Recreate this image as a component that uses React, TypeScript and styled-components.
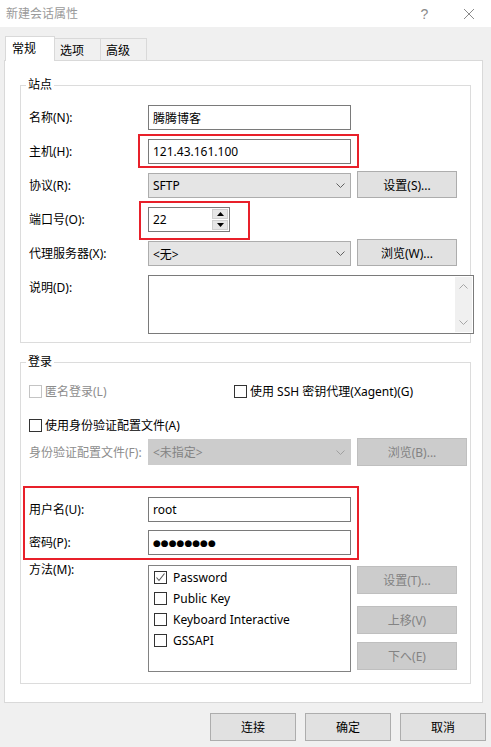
import React from 'react';
import styled, { createGlobalStyle } from 'styled-components';

const GlobalStyle = createGlobalStyle`
  html, body {
    margin: 0;
    padding: 0;
    background: #f0f0f0;
  }
  body {
    font-family: "Noto Sans", "Noto Sans CJK SC", sans-serif;
    font-size: 12px;
    color: #000;
  }
  *, *::before, *::after {
    box-sizing: border-box;
  }
`;

const Chevron: React.FC<{ up?: boolean; color?: string }> = ({ up, color = '#606060' }) => (
    <svg width="9" height="5" viewBox="0 0 9 5">
        <polyline
            points={up ? '0.5,4.5 4.5,0.5 8.5,4.5' : '0.5,0.5 4.5,4.5 8.5,0.5'}
            fill="none"
            stroke={color}
            strokeWidth="1"
        />
    </svg>
);

const Tick = () => (
    <svg width="11" height="11" viewBox="0 0 11 11">
        <polyline points="1.5,5.5 4,8.5 9.5,1.5" fill="none" stroke="#555" strokeWidth="1.1" />
    </svg>
);

const App: React.FC = () => {
    return (
        <>
            <GlobalStyle />
            <Window>
                <TitleBar>
                    <Title>新建会话属性</Title>
                    <TitleButton>?</TitleButton>
                    <TitleButton $w={44}>
                        <svg width="12" height="12" viewBox="0 0 12 12">
                            <path d="M1 1 L11 11 M11 1 L1 11" stroke="#8a8a8a" strokeWidth="1" />
                        </svg>
                    </TitleButton>
                </TitleBar>

                <Body>
                    <TabStrip>
                        <Tab $active>常规</Tab>
                        <Tab>选项</Tab>
                        <Tab>高级</Tab>
                    </TabStrip>

                    <Panel>
                        <Group>
                            <Legend>站点</Legend>
                            <FormGrid>
                                <Label>名称(N):</Label>
                                <TextInput>腾腾博客</TextInput>
                                <span />

                                <Label>主机(H):</Label>
                                <Highlight $l={-10} $t={-5} $w={221} $h={34}>
                                    <TextInput>121.43.161.100</TextInput>
                                </Highlight>
                                <span />

                                <Label>协议(R):</Label>
                                <Select>
                                    SFTP
                                    <Chevron />
                                </Select>
                                <Button $h={27} $lift>设置(S)...</Button>

                                <Label>端口号(O):</Label>
                                <Highlight $l={-9} $t={-6} $w={111} $h={39} $fit>
                                    <SpinBox>
                                        <SpinValue>22</SpinValue>
                                        <SpinButtons>
                                            <SpinArrow>
                                                <svg width="7" height="4" viewBox="0 0 7 4">
                                                    <polygon points="0,4 3.5,0 7,4" fill="#000" />
                                                </svg>
                                            </SpinArrow>
                                            <SpinArrow>
                                                <svg width="7" height="4" viewBox="0 0 7 4">
                                                    <polygon points="0,0 3.5,4 7,0" fill="#000" />
                                                </svg>
                                            </SpinArrow>
                                        </SpinButtons>
                                    </SpinBox>
                                </Highlight>
                                <span />

                                <Label>代理服务器(X):</Label>
                                <Select>
                                    {'<无>'}
                                    <Chevron />
                                </Select>
                                <Button $h={27} $lift>浏览(W)...</Button>

                                <Label $top>说明(D):</Label>
                                <DescBox>
                                    <ScrollTrack>
                                        <Chevron up color="#a6a6a6" />
                                        <Chevron color="#a6a6a6" />
                                    </ScrollTrack>
                                </DescBox>
                            </FormGrid>
                        </Group>

                        <Group $mt={11} $pt={11} $pb={11}>
                            <Legend>登录</Legend>
                            <CheckRow>
                                <CheckItem $w={205} $disabled>
                                    <CheckBox $disabled />
                                    匿名登录(L)
                                </CheckItem>
                                <CheckItem>
                                    <CheckBox />
                                    使用 SSH 密钥代理(Xagent)(G)
                                </CheckItem>
                            </CheckRow>
                            <CheckRow $mt={14}>
                                <CheckItem>
                                    <CheckBox />
                                    使用身份验证配置文件(A)
                                </CheckItem>
                            </CheckRow>
                            <LineGrid $mt={3} $h={28} $side={110}>
                                <Label $disabled>身份验证配置文件(F):</Label>
                                <Select $disabled $h={26}>
                                    {'<未指定>'}
                                    <Chevron color="#a0a0a0" />
                                </Select>
                                <Button $w={110} $disabled>
                                    浏览(B)...
                                </Button>
                            </LineGrid>

                            <Credentials>
                                <LineGrid $h={25}>
                                    <Label>用户名(U):</Label>
                                    <TextInput>root</TextInput>
                                </LineGrid>
                                <LineGrid $h={25} $mt={8}>
                                    <Label>密码(P):</Label>
                                    <TextInput>
                                        <Dots>●●●●●●●●</Dots>
                                    </TextInput>
                                </LineGrid>
                            </Credentials>

                            <MethodGrid>
                                <Label $top $nudge={-3}>
                                    方法(M):
                                </Label>
                                <MethodList>
                                    <ListItem>
                                        <CheckBox>
                                            <Tick />
                                        </CheckBox>
                                        Password
                                    </ListItem>
                                    <ListItem>
                                        <CheckBox />
                                        Public Key
                                    </ListItem>
                                    <ListItem>
                                        <CheckBox />
                                        Keyboard Interactive
                                    </ListItem>
                                    <ListItem>
                                        <CheckBox />
                                        GSSAPI
                                    </ListItem>
                                </MethodList>
                                <SideButtons>
                                    <Button $disabled>设置(T)...</Button>
                                    <Button $disabled $mt={12}>
                                        上移(V)
                                    </Button>
                                    <Button $disabled $mt={8}>
                                        下へ(E)
                                    </Button>
                                </SideButtons>
                            </MethodGrid>
                        </Group>
                    </Panel>

                    <Footer>
                        <Button $w={86}>连接</Button>
                        <Button $w={86}>确定</Button>
                        <Button $w={86}>取消</Button>
                    </Footer>
                </Body>
            </Window>
        </>
    );
};

const Window = styled.div`
    width: 491px;
    height: 747px;
    display: flex;
    flex-direction: column;
    overflow: hidden;
    background: #f0f0f0;
`;

const TitleBar = styled.div`
    height: 27px;
    flex: none;
    display: flex;
    align-items: center;
    padding-left: 6px;
    background: #fff;
`;

const Title = styled.div`
    flex: 1;
    color: #9a9a9a;
    font-size: 12px;
    line-height: 16px;
`;

const TitleButton = styled.div<{ $w?: number }>`
    width: ${p => p.$w ?? 45}px;
    height: 27px;
    display: flex;
    align-items: center;
    justify-content: center;
    color: #8a8a8a;
    font-family: "Liberation Sans", sans-serif;
    font-size: 14px;
`;

const Body = styled.div`
    flex: 1;
    display: flex;
    flex-direction: column;
    padding: 9px 8px 0 4px;
`;

const TabStrip = styled.div`
    height: 25px;
    flex: none;
    display: flex;
    align-items: flex-end;
    padding-left: 1px;
    margin-bottom: -1px;
    position: relative;
    z-index: 1;
`;

const Tab = styled.div<{ $active?: boolean }>`
    width: ${p => (p.$active ? 50 : 46)}px;
    height: ${p => (p.$active ? 25 : 22)}px;
    margin-bottom: ${p => (p.$active ? 0 : 1)}px;
    padding: 4px 0 0 ${p => (p.$active ? 6 : 5)}px;
    line-height: 16px;
    font-size: 12px;
    background: ${p => (p.$active ? '#fff' : '#f0f0f0')};
    border: 1px solid #d9d9d9;
    border-bottom: none;
    ${p => (p.$active ? '' : 'border-left: none;')}
`;

const Panel = styled.div`
    height: 643px;
    flex: none;
    background: #fff;
    border: 1px solid #d9d9d9;
    padding: 16px 11px 0 15px;
`;

const Group = styled.fieldset<{ $mt?: number; $pt?: number; $pb?: number }>`
    margin: ${p => p.$mt ?? 0}px 0 0 0;
    padding: ${p => p.$pt ?? 12}px 7px ${p => p.$pb ?? 8}px 8px;
    border: 1px solid #dcdcdc;
    min-width: 0;
`;

const Legend = styled.legend`
    padding: 0 2px;
    margin-left: -3px;
    line-height: 16px;
    font-size: 12px;
`;

const FormGrid = styled.div`
    display: grid;
    grid-template-columns: 113px 203px 100px;
    column-gap: 6px;
    row-gap: 9px;
`;

const Label = styled.div<{ $disabled?: boolean; $top?: boolean; $nudge?: number }>`
    line-height: ${p => (p.$top && p.$nudge ? '16px' : '25px')};
    white-space: nowrap;
    color: ${p => (p.$disabled ? '#8d8d8d' : '#000')};
    align-self: ${p => (p.$top ? 'start' : 'center')};
    margin-top: ${p => p.$nudge ?? 0}px;
`;

const TextInput = styled.div`
    height: 25px;
    display: flex;
    align-items: center;
    padding: 0 4px;
    border: 1px solid #7a7a7a;
    background: #fff;
    white-space: nowrap;
`;

const Highlight = styled.div<{ $l: number; $t: number; $w: number; $h: number; $fit?: boolean }>`
    position: relative;
    ${p => (p.$fit ? 'justify-self: start;' : '')}

    &::after {
        content: '';
        position: absolute;
        left: ${p => p.$l}px;
        top: ${p => p.$t}px;
        width: ${p => p.$w}px;
        height: ${p => p.$h}px;
        border: 2px solid #e8202a;
        pointer-events: none;
    }
`;

const Select = styled.div<{ $disabled?: boolean; $h?: number }>`
    height: ${p => p.$h ?? 25}px;
    display: flex;
    align-items: center;
    justify-content: space-between;
    padding: 0 5px 0 4px;
    border: 1px solid ${p => (p.$disabled ? '#cccccc' : '#adadad')};
    background: ${p => (p.$disabled ? '#cccccc' : '#e5e5e5')};
    color: ${p => (p.$disabled ? '#838383' : '#000')};
`;

const Button = styled.div<{ $w?: number; $h?: number; $disabled?: boolean; $lift?: boolean; $mt?: number }>`
    width: ${p => p.$w ?? 100}px;
    height: ${p => p.$h ?? 28}px;
    margin-top: ${p => (p.$lift ? -2 : p.$mt ?? 0)}px;
    display: flex;
    align-items: center;
    justify-content: center;
    border: 1px solid ${p => (p.$disabled ? '#bfbfbf' : '#adadad')};
    background: ${p => (p.$disabled ? '#cccccc' : '#e1e1e1')};
    color: ${p => (p.$disabled ? '#838383' : '#000')};
    font-size: 12px;
`;

const SpinBox = styled.div`
    width: 82px;
    height: 25px;
    display: flex;
    border: 1px solid #7a7a7a;
    background: #fff;
`;

const SpinValue = styled.div`
    flex: 1;
    display: flex;
    align-items: center;
    padding-left: 4px;
`;

const SpinButtons = styled.div`
    width: 17px;
    display: flex;
    flex-direction: column;
    gap: 1px;
    padding: 1px 1px 1px 0;
`;

const SpinArrow = styled.div`
    flex: 1;
    display: flex;
    align-items: center;
    justify-content: center;
    background: #e6e6e6;
    border: 1px solid #cfcfcf;
`;

const DescBox = styled.div`
    grid-column: 2 / span 2;
    width: 326px;
    height: 59px;
    display: flex;
    justify-content: flex-end;
    padding: 1px;
    border: 1px solid #7a7a7a;
    background: #fff;
`;

const ScrollTrack = styled.div`
    width: 17px;
    display: flex;
    flex-direction: column;
    align-items: center;
    justify-content: space-between;
    padding: 7px 0 7px;
    background: #f0f0f0;
`;

const CheckRow = styled.div<{ $mt?: number }>`
    height: 20px;
    display: flex;
    align-items: center;
    margin-top: ${p => p.$mt ?? 0}px;
`;

const CheckItem = styled.div<{ $w?: number; $disabled?: boolean }>`
    ${p => (p.$w ? `width: ${p.$w}px;` : '')}
    display: flex;
    align-items: center;
    gap: 3px;
    white-space: nowrap;
    color: ${p => (p.$disabled ? '#8d8d8d' : '#000')};
`;

const CheckBox = styled.div<{ $disabled?: boolean }>`
    width: 13px;
    height: 13px;
    flex: none;
    display: flex;
    align-items: center;
    justify-content: center;
    border: 1px solid ${p => (p.$disabled ? '#c4c4c4' : '#333')};
    background: #fff;
`;

const LineGrid = styled.div<{ $mt?: number; $h: number; $side?: number }>`
    display: grid;
    grid-template-columns: 113px 203px ${p => (p.$side ? `${p.$side}px` : '')};
    column-gap: 6px;
    align-items: center;
    height: ${p => p.$h}px;
    margin-top: ${p => p.$mt ?? 0}px;
`;

const Credentials = styled.div`
    position: relative;
    margin-top: 31px;

    &::after {
        content: '';
        position: absolute;
        left: -6px;
        top: -11px;
        width: 336px;
        height: 74px;
        border: 2px solid #e8202a;
        pointer-events: none;
    }
`;

const Dots = styled.span`
    font-family: "DejaVu Sans", sans-serif;
    font-size: 9px;
    letter-spacing: 0;
`;

const MethodGrid = styled.div`
    display: grid;
    grid-template-columns: 113px 203px 100px;
    column-gap: 6px;
    align-items: start;
    margin-top: 10px;
`;

const MethodList = styled.div`
    height: 107px;
    padding: 1px 0 0 5px;
    border: 1px solid #828282;
    background: #fff;
`;

const ListItem = styled.div`
    height: 21px;
    display: flex;
    align-items: center;
    gap: 6px;
    white-space: nowrap;
`;

const SideButtons = styled.div`
    display: flex;
    flex-direction: column;
    padding-top: 1px;
`;

const Footer = styled.div`
    display: flex;
    justify-content: flex-end;
    gap: 9px;
    margin: 10px -3px 0 0;
`;

export default App;
